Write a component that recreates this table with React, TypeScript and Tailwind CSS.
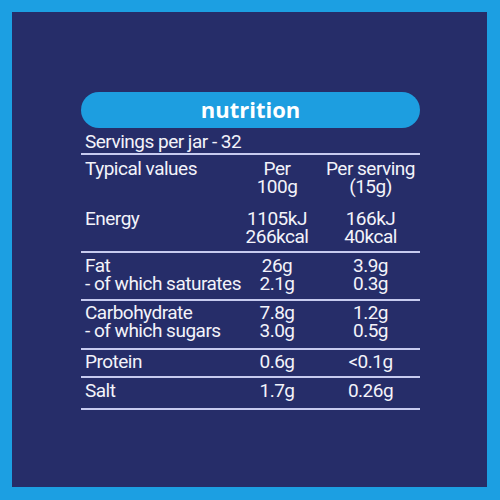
import React from 'react';

interface NutrientRow {
  labels: string[];
  per100: string[];
  perServing: string[];
  pad: string;
}

const rows: NutrientRow[] = [
  {
    labels: ['Typical values'],
    per100: ['Per', '100g'],
    perServing: ['Per serving', '(15g)'],
    pad: 'pt-[5px] pb-[14px]',
  },
  {
    labels: ['Energy'],
    per100: ['1105kJ', '266kcal'],
    perServing: ['166kJ', '40kcal'],
    pad: 'pb-[5px] border-b-2',
  },
  {
    labels: ['Fat', '- of which saturates'],
    per100: ['26g', '2.1g'],
    perServing: ['3.9g', '0.3g'],
    pad: 'pt-[4px] pb-[6px] border-b-2',
  },
  {
    labels: ['Carbohydrate', '- of which sugars'],
    per100: ['7.8g', '3.0g'],
    perServing: ['1.2g', '0.5g'],
    pad: 'pt-[3px] pb-[8px] border-b-2',
  },
  {
    labels: ['Protein'],
    per100: ['0.6g'],
    perServing: ['<0.1g'],
    pad: 'pt-[3px] pb-[5px] border-b-2',
  },
  {
    labels: ['Salt'],
    per100: ['1.7g'],
    perServing: ['0.26g'],
    pad: 'pt-[4px] pb-[8px] border-b-2',
  },
];

const Lines = ({ items, className = '' }: { items: string[]; className?: string }) => (
  <div className={className}>
    {items.map((t) => (
      <div key={t} className="whitespace-nowrap">
        {t}
      </div>
    ))}
  </div>
);

const App = () => {
  return (
    <div className="h-[500px] w-[500px] bg-[#1c9fe2] p-[12px]">
      <div className="h-[475px] w-[475px] bg-[#262d69] pl-[69px] pt-[80px]">
        <div className="w-[339px]">
          <div className="flex h-[36px] items-center justify-center rounded-full bg-[#1d9ee0] pb-[2px] font-['Open_Sans',sans-serif] text-[22px] font-bold text-white">
            nutrition
          </div>
          <div className="font-['Roboto',sans-serif] text-[19px] leading-[18px] tracking-[-0.5px] text-[#f3f3fa]">
            <div className="border-b-2 border-[#c7cbef] pb-[2px] pl-[4px] pt-[5px]">Servings per jar - 32</div>
            {rows.map((r) => (
              <div
                key={r.labels[0]}
                className={`grid grid-cols-[152px_88px_1fr] border-[#c7cbef] ${r.pad}`}
              >
                <Lines items={r.labels} className="pl-[4px]" />
                <Lines items={r.per100} className="text-center" />
                <Lines items={r.perServing} className="text-center" />
              </div>
            ))}
          </div>
        </div>
      </div>
    </div>
  );
};

export default App;
